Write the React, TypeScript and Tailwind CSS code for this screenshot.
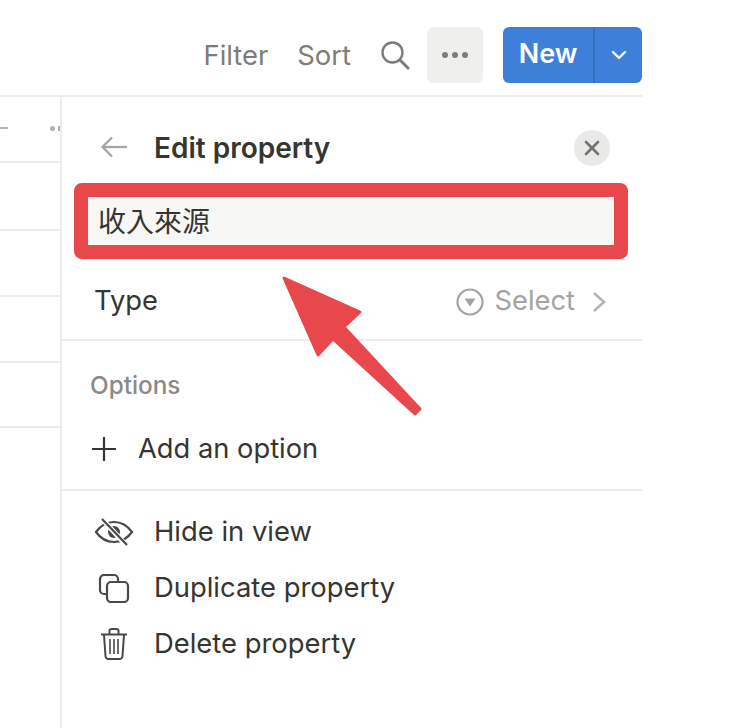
import { ChevronDown } from 'lucide-react'

const rowHeights = ['h-[66px]', 'h-[68px]', 'h-[66px]', 'h-[66px]', 'h-[65px]']

function SearchIcon() {
  return (
    <svg width="30" height="30" viewBox="0 0 30 30" fill="none" stroke="#7d7c78" strokeWidth="2.4" strokeLinecap="round">
      <circle cx="12.5" cy="12.5" r="10" />
      <path d="M20 20l8 8" strokeWidth="3" />
    </svg>
  )
}

function BackArrow() {
  return (
    <svg width="28" height="22" viewBox="0 0 28 22" fill="none" stroke="#a3a3a1" strokeWidth="2.2">
      <path d="M27 11H3" />
      <path d="M12 1.5L2.5 11l9.5 9.5" />
    </svg>
  )
}

function PlusIcon() {
  return (
    <svg width="28" height="28" viewBox="0 0 28 28" fill="none" stroke="#37352f" strokeWidth="2.2">
      <path d="M14 2v24M2 14h24" />
    </svg>
  )
}

function CircleDown() {
  return (
    <svg width="30" height="30" viewBox="0 0 30 30" fill="none">
      <circle cx="15" cy="15" r="12.5" stroke="#a3a3a1" strokeWidth="2.2" />
      <path d="M9.5 11.5h11L15 19.5z" fill="#a3a3a1" />
    </svg>
  )
}

function ChevronBig() {
  return (
    <svg width="14" height="22" viewBox="0 0 14 22" fill="none" stroke="#b3b3b1" strokeWidth="2.4">
      <path d="M2 2l10 9-10 9" />
    </svg>
  )
}

function EyeOff() {
  return (
    <svg width="40" height="28" viewBox="0 0 40 28" fill="none" stroke="#4a4946" strokeWidth="2.2">
      <path d="M2 14C7 7 13 4 20 4s13 3 18 10c-5 7-11 10-18 10S7 21 2 14z" />
      <path d="M20 8a6 6 0 0 1 6 6 6 6 0 0 1-6 6 6 6 0 0 1-6-6 6 6 0 0 1 6-6z" fill="#4a4946" stroke="none" />
      <path d="M8 1l24 26" stroke="#fff" strokeWidth="5" />
      <path d="M8 1l25 26" />
    </svg>
  )
}

function Copy() {
  return (
    <svg width="32" height="30" viewBox="0 0 32 30" fill="none" stroke="#4a4946" strokeWidth="2.2">
      <path d="M8 21H6a4 4 0 0 1-4-4V6a4 4 0 0 1 4-4h10a4 4 0 0 1 4 4v2" />
      <rect x="9" y="9" width="21" height="20" rx="4" />
    </svg>
  )
}

function Trash() {
  return (
    <svg width="28" height="32" viewBox="0 0 28 32" fill="none" stroke="#4a4946" strokeWidth="2">
      <path d="M1 6.5h26" />
      <path d="M9.5 6V3a2 2 0 0 1 2-2h5a2 2 0 0 1 2 2v3" />
      <path d="M4 7l1.5 21a3 3 0 0 0 3 3h11a3 3 0 0 0 3-3L24 7" />
      <path d="M10 11v15M14 11v15M18 11v15" strokeWidth="1.6" />
    </svg>
  )
}

const actions = [
  { label: 'Hide in view', icon: EyeOff },
  { label: 'Duplicate property', icon: Copy },
  { label: 'Delete property', icon: Trash },
]

export default function App() {
  return (
    <div className="w-[740px] h-[728px] overflow-hidden bg-white relative font-['Inter','Noto_Sans_CJK_TC',sans-serif] text-[#37352f]">
      <div className="w-[642px]">
        <div className="h-[97px] border-b-2 border-[#ececeb] flex items-start justify-end pt-[27px]">
          <span className="text-[27.4px] leading-[57px] text-[#7d7c78]">Filter</span>
          <span className="ml-[29px] text-[27.4px] leading-[57px] text-[#7d7c78]">Sort</span>
          <div className="ml-[29px] mt-[13px] w-[30px] h-[30px]"><SearchIcon /></div>
          <div className="ml-[17px] w-[56px] h-[56px] rounded-md bg-[#efefee] flex items-center justify-center gap-[4px]">
            <span className="w-[6px] h-[6px] rounded-full bg-[#7d7c78]" />
            <span className="w-[6px] h-[6px] rounded-full bg-[#7d7c78]" />
            <span className="w-[6px] h-[6px] rounded-full bg-[#7d7c78]" />
          </div>
          <div className="ml-[20px] w-[139px] h-[56px] rounded-md bg-[#3e80d9] flex text-white">
            <div className="w-[92px] flex items-center justify-center text-[27px] leading-[52px] pb-[3px] font-semibold border-r-2 border-[#3570c0]">New</div>
            <div className="flex-1 flex items-center justify-center">
              <ChevronDown className="w-[24px] h-[24px]" strokeWidth={2.4} />
            </div>
          </div>
        </div>

        <div className="flex h-[631px]">
          <div className="w-[62px] shrink-0 border-r-2 border-[#ececeb] relative">
            {rowHeights.map((h, i) => (
              <div key={i} className={`${h} border-b-2 border-[#ececeb]`} />
            ))}
            <div className="absolute left-0 top-[30px] w-[8px] h-[2px] bg-[#b5b5b3]" />
            <div className="absolute left-[50px] top-[29px] w-[5px] h-[5px] rounded-full bg-[#b0b0ae]" />
            <div className="absolute left-[58px] top-[29px] w-[2px] h-[5px] bg-[#b0b0ae]" />
          </div>

          <div className="flex-1 min-w-0">
            <div className="h-[86px] flex items-start pt-[32px] pl-[38px] pr-[32px]">
              <div className="mt-[7px]"><BackArrow /></div>
              <span className="ml-[26px] text-[28px] leading-[38px] font-semibold text-[#37352f]">Edit property</span>
              <div className="ml-auto mt-[1px] w-[36px] h-[36px] rounded-full bg-[#e9e9e8] flex items-center justify-center">
                <svg width="16" height="16" viewBox="0 0 16 16" stroke="#73726e" strokeWidth="2.6" strokeLinecap="round">
                  <path d="M2 2l12 12M14 2L2 14" />
                </svg>
              </div>
            </div>

            <div className="ml-[12px] mr-[14px] h-[76px] rounded-[8px] border-[14px] border-[#e8474c] bg-[#f7f7f5] px-[10px] flex items-center text-[28px] leading-[48px] pt-[1px] text-[#37352f]">
              收入來源
            </div>

            <div className="h-[82px] border-b-2 border-[#ececeb] flex items-center pl-[32px] pr-[36px] pt-[5px]">
              <span className="text-[27.3px]">Type</span>
              <div className="ml-auto flex items-center text-[#a3a3a1]">
                <CircleDown />
                <span className="ml-[10px] text-[27.3px]">Select</span>
                <div className="ml-[17px]"><ChevronBig /></div>
              </div>
            </div>

            <div className="h-[150px] border-b-2 border-[#ececeb] pl-[28px]">
              <div className="pt-[29px] text-[24.3px] leading-[30px] font-medium text-[#8a8986]">Options</div>
              <div className="mt-[31px] flex items-center text-[27.3px] leading-[36px]">
                <PlusIcon />
                <span className="ml-[20px]">Add an option</span>
              </div>
            </div>

            <div className="pt-[13px] flex flex-col">
              {actions.map((a) => (
                <div key={a.label} className="h-[56px] flex items-center pl-[32px] text-[27.4px] text-[#37352f]">
                  <div className="w-[40px] flex justify-center"><a.icon /></div>
                  <span className="ml-[20px]">{a.label}</span>
                </div>
              ))}
            </div>
          </div>
        </div>
      </div>

      <svg className="absolute left-0 top-0 pointer-events-none" width="740" height="728" viewBox="0 0 740 728">
        <path
          d="M284 278 L360 312 L344 327 L420 409 L415 414 L333 339 L318 355 Z"
          fill="#e8474c"
          stroke="#e8474c"
          strokeWidth="3"
          strokeLinejoin="round"
        />
      </svg>
    </div>
  )
}
